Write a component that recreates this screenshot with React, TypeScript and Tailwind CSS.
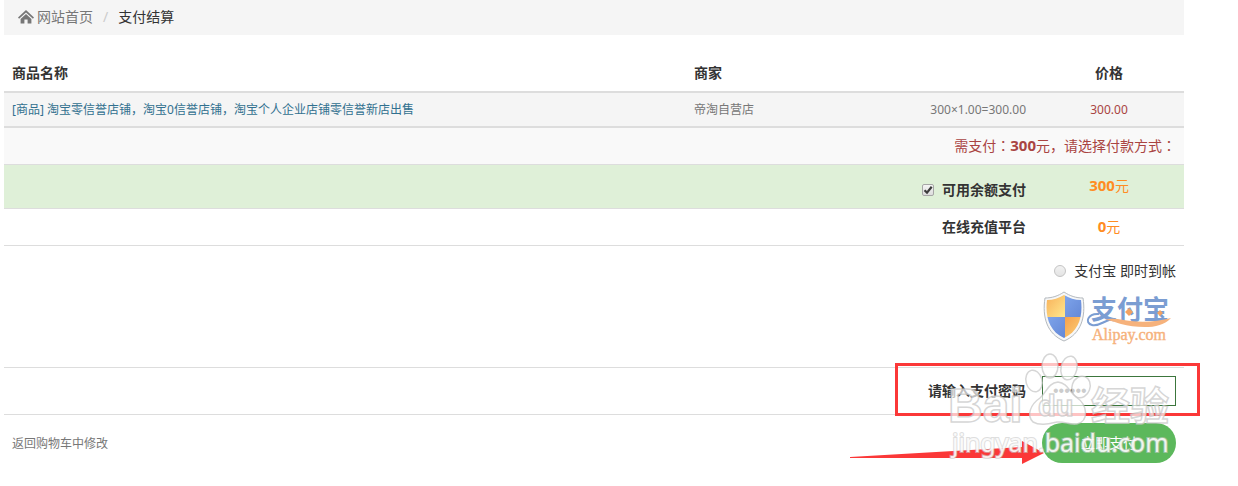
import { useState } from 'react';

const orange = 'text-[#ff8c22]';

function HomeIcon() {
  return (
    <svg className="w-4 h-4" viewBox="0 0 16 16" fill="#777" aria-hidden="true">
      <path d="M8 1 L16 8.6 L14.9 9.8 L8 3.4 L1.1 9.8 L0 8.6 Z" />
      <path d="M8 5 L13.4 10 V14.6 H9.6 V10.4 H6.4 V14.6 H2.6 V10 Z" />
    </svg>
  );
}

function AlipayLogo() {
  return (
    <svg className="w-[135px] h-14" viewBox="0 0 135 56" role="img" aria-label="支付宝 Alipay.com">
      <defs>
        <linearGradient id="gold" x1="0" y1="0" x2="1" y2="1">
          <stop offset="0" stopColor="#f6a04a" />
          <stop offset="1" stopColor="#ffe88e" />
        </linearGradient>
        <linearGradient id="blue" x1="0" y1="0" x2="1" y2="1">
          <stop offset="0" stopColor="#82a8ee" />
          <stop offset="1" stopColor="#5f83d2" />
        </linearGradient>
        <clipPath id="shield">
          <path d="M23 6 C18 9 12 11 6 11 C4 27 8 42 23 49 C38 42 42 27 40 11 C34 11 28 9 23 6 Z" />
        </clipPath>
      </defs>
      <path
        d="M23 3 C17 7 11 9 4 9 C1 28 6 45 23 52 C40 45 45 28 42 9 C35 9 29 7 23 3 Z"
        fill="#f6f7f8"
        stroke="#b4b9be"
      />
      <g clipPath="url(#shield)">
        <rect x="0" y="0" width="24" height="28" fill="url(#gold)" />
        <rect x="24" y="0" width="24" height="28" fill="url(#blue)" />
        <rect x="0" y="28" width="24" height="28" fill="url(#blue)" />
        <rect x="24" y="28" width="24" height="28" fill="url(#gold)" />
      </g>
      <text x="50" y="30" fontSize="26" fontWeight="700" fill="#7b9dd2" fontFamily="Noto Sans CJK SC, sans-serif">
        支付宝
      </text>
      <path
        d="M58 25 C47 24 43 34 51 36 C59 38 64 30 74 30"
        fill="none"
        stroke="#7b9dd2"
        strokeWidth="2"
      />
      <path
        d="M64 31 C72 28 82 31 90 32 C104 34 118 32 130 29 C120 41 96 39 80 35 C73 33 69 31 64 31 Z"
        fill="#f6b27c"
      />
      <path d="M88 19 l4 4 l-4 4 l-4 -4 Z M119 21 l3 3 l-3 3 l-3 -3 Z" fill="#f4a261" />
      <text
        x="51"
        y="51"
        fontSize="16"
        fill="#f6b27c"
        stroke="#f6b27c"
        strokeWidth="0.4"
        fontFamily="Liberation Serif, serif"
      >
        Alipay.com
      </text>
    </svg>
  );
}

// red frame, pointer arrow and watermark lying over the bottom of the form
function Annotations() {
  return (
    <svg
      className="absolute -right-4 top-[345px] w-[350px] h-[130px] pointer-events-none"
      viewBox="0 0 350 130"
      aria-hidden="true"
    >
      <rect x="46.500" y="19.500" width="302" height="50" fill="none" stroke="#fb3838" strokeWidth="3" />
      <path d="M0 112 L172 102 V96 L194 108 L172 119 V113 L0 113 Z" fill="#fb3838" />
      <g fill="#fff" fillOpacity="0.7" stroke="#c4c4c4" strokeOpacity="0.7" strokeWidth="1.500">
        <ellipse cx="184" cy="36" rx="8" ry="11" transform="rotate(-15 184 36)" />
        <ellipse cx="200" cy="21" rx="8" ry="12" />
        <ellipse cx="219" cy="23" rx="8" ry="12" transform="rotate(12 219 23)" />
        <ellipse cx="231" cy="42" rx="9" ry="11" transform="rotate(20 231 42)" />
        <path d="M208 37 C217 38 219 46 226 52 C238 60 239 76 227 79 C219 80 214 76 207 77 C198 79 190 81 183 77 C176 70 181 59 190 53 C197 47 198 38 208 37 Z" />
        <text x="98" y="77" fontSize="48" fontWeight="700" fontFamily="Liberation Sans, sans-serif">
          Bai
        </text>
        <text x="188" y="71" fontSize="29" fontWeight="700" fontFamily="Liberation Sans, sans-serif">
          du
        </text>
        <text x="241" y="75" fontSize="39" fontWeight="700" fontFamily="Noto Sans CJK SC, sans-serif">
          经验
        </text>
      </g>
      <text
        x="102"
        y="107"
        fontSize="25"
        fontFamily="Noto Sans, sans-serif"
        fill="#fff"
        fillOpacity="0.85"
        stroke="#c8c8c8"
        strokeOpacity="0.6"
        strokeWidth="2"
        paintOrder="stroke"
      >
        jingyan.baidu.com
      </text>
    </svg>
  );
}

export default function App() {
  const [useBalance, setUseBalance] = useState(true);
  const [password, setPassword] = useState('123456');

  return (
    <div className="font-['Noto_Sans','Noto_Sans_CJK_SC',sans-serif] text-sm leading-5 text-[#333] bg-white pl-1 pr-[54px]">
      <main className="relative">
        <nav className="flex items-center pt-[7px] pb-2 px-3.5 mb-5 bg-[#f5f5f5]">
          <a href="#" className="flex items-center gap-[3px] text-[#777]">
            <HomeIcon />
            网站首页
          </a>
          <span className="px-2.5 text-[#ccc]">/</span>
          <span>支付结算</span>
        </nav>

        <table className="w-full table-fixed border-separate border-spacing-0">
          <colgroup>
            <col />
            <col className="w-[174px]" />
            <col className="w-[174px]" />
            <col className="w-[150px]" />
          </colgroup>
          <thead>
            <tr>
              <th className="p-2 border-b-2 border-[#ddd] text-left font-bold">商品名称</th>
              <th className="p-2 border-b-2 border-[#ddd] text-left font-bold">商家</th>
              <th className="p-2 border-b-2 border-[#ddd]"></th>
              <th className="p-2 border-b-2 border-[#ddd] text-center font-bold">价格</th>
            </tr>
          </thead>
          <tbody>
            <tr className="bg-[#f5f5f5] text-xs leading-[17px] text-[#777]">
              <td className="p-2 border-b-2 border-[#ddd]">
                <a href="#" className="text-[#31708f]">
                  [商品] 淘宝零信誉店铺，淘宝0信誉店铺，淘宝个人企业店铺零信誉新店出售
                </a>
              </td>
              <td className="p-2 border-b-2 border-[#ddd]">帝淘自营店</td>
              <td className="p-2 border-b-2 border-[#ddd] text-right">300×1.00=300.00</td>
              <td className="p-2 border-b-2 border-[#ddd] text-center text-[#a94442]">300.00</td>
            </tr>
            <tr className="bg-[#f9f9f9]">
              <td colSpan={4} className="pt-[7px] px-2 pb-2 border-b border-[#ddd] text-right text-[#a94442]">
                需支付<span className="font-['Noto_Sans_CJK_JP',sans-serif]">：</span>
                <b className="text-[15px] leading-5">300</b>元，请选择付款方式
                <span className="font-['Noto_Sans_CJK_JP',sans-serif]">：</span>
              </td>
            </tr>
            <tr className="bg-[#dff0d8]">
              <td colSpan={3} className="px-2 pt-[15px] pb-2 border-b border-[#ddd]">
                <label className="flex items-center justify-end gap-2 font-bold">
                  <span className="grid">
                    <input
                      type="checkbox"
                      checked={useBalance}
                      onChange={(e) => setUseBalance(e.target.checked)}
                      className="peer col-start-1 row-start-1 appearance-none w-3 h-3 rounded-xs border border-[#a6a6a6] bg-linear-to-b from-[#f4f4f4] to-[#ddd]"
                    />
                    <svg
                      className="col-start-1 row-start-1 w-3 h-3 pointer-events-none invisible peer-checked:visible"
                      viewBox="0 0 12 12"
                      fill="none"
                      stroke="#3c3c3c"
                      strokeWidth="2.200"
                    >
                      <path d="M2.500 6.200 L5 8.600 L9.700 2.700" />
                    </svg>
                  </span>
                  可用余额支付
                </label>
              </td>
              <td className={`px-2 pt-2 pb-2.5 border-b border-[#ddd] text-center ${orange}`}>
                <b className="text-[15px] leading-5">300</b>元
              </td>
            </tr>
            <tr>
              <td colSpan={3} className="pt-[7px] px-2 pb-2 border-b border-[#ddd] text-right font-bold">
                在线充值平台
              </td>
              <td className={`pt-[7px] px-2 pb-2 border-b border-[#ddd] text-center ${orange}`}>
                <b className="text-[15px] leading-5">0</b>元
              </td>
            </tr>
            <tr>
              <td colSpan={4} className="px-2 pt-[15px] pb-[22px] border-b border-[#ddd]">
                <label className="flex flex-col items-end gap-2">
                  <span className="flex items-center gap-2">
                    <input
                      type="radio"
                      name="platform"
                      className="appearance-none w-3 h-3 rounded-full border border-[#c4c4c4] bg-linear-to-b from-[#f2f2f2] to-[#e4e4e4] checked:border-4 checked:border-[#666]"
                    />
                    支付宝 即时到帐
                  </span>
                  <AlipayLogo />
                </label>
              </td>
            </tr>
            <tr>
              <td colSpan={3} className="p-2 border-b border-[#ddd] text-right font-bold">
                <label htmlFor="pay-password">请输入支付密码</label>
              </td>
              <td className="p-2 border-b border-[#ddd]">
                <input
                  id="pay-password"
                  type="password"
                  value={password}
                  onChange={(e) => setPassword(e.target.value)}
                  className="block w-full h-[30px] px-2.5 border border-[#3c763d] bg-white text-base text-[#555] font-['Liberation_Sans',sans-serif]"
                />
              </td>
            </tr>
            <tr>
              <td colSpan={3} className="p-2">
                <a href="#" className="text-xs text-[#777]">
                  返回购物车中修改
                </a>
              </td>
              <td className="p-2">
                <button type="button" className="block w-full h-10 rounded-full bg-[#5cb85c] text-white">
                  立即支付
                </button>
              </td>
            </tr>
          </tbody>
        </table>

        <Annotations />
      </main>
    </div>
  );
}
